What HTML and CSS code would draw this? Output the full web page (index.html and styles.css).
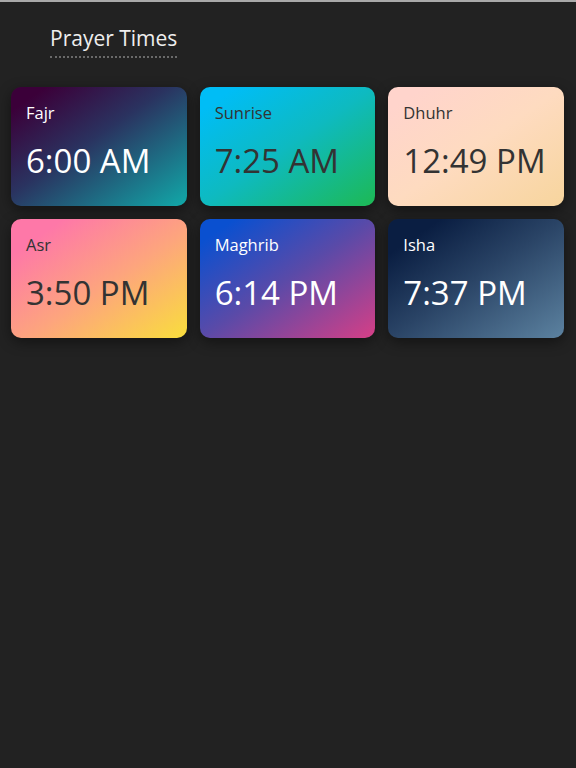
FILE: index.html
```
<!DOCTYPE html>
<html lang="en">

<head>
    <meta charset="UTF-8">
    <meta name="viewport" content="width=device-width, initial-scale=1.0">
    <title>Prayer Times</title>
    <link rel="stylesheet" href="styles.css">
</head>

<body>
    <header class="header">
        <h1 class="title">Prayer Times</h1>
    </header>
    <div class="wrap">
        <div class="card fajr">
            <div class="name">Fajr</div>
            <div class="time">6:00 AM</div>
        </div>
        <div class="card sunrise">
            <div class="name">Sunrise</div>
            <div class="time">7:25 AM</div>
        </div>
        <div class="card dhuhr">
            <div class="name">Dhuhr</div>
            <div class="time">12:49 PM</div>
        </div>
        <div class="card asr">
            <div class="name">Asr</div>
            <div class="time">3:50 PM</div>
        </div>
        <div class="card maghrib">
            <div class="name">Maghrib</div>
            <div class="time">6:14 PM</div>
        </div>
        <div class="card isha">
            <div class="name">Isha</div>
            <div class="time">7:37 PM</div>
        </div>
    </div>
</body>
</html>
```

FILE: styles.css
```
* {
    margin: 0;
    box-sizing: border-box;
    padding: 0;
}

html,
body {
    height: 100%;
}

body {
    background: #222222;
    border-top: 2px solid #a9a9a9;
    font-family: "Open Sans", "Liberation Sans", sans-serif;
    color: #ffffff;
}

.header {
    padding: 22px 0 0 50px;
}

.title {
    display: inline-block;
    font-size: 21px;
    font-weight: 400;
    line-height: 28px;
    padding-bottom: 4px;
    color: #eeeeee;
    border-bottom: 2px dotted #6a6a6a;
}

.wrap {
    display: grid;
    grid-template-columns: repeat(3, 1fr);
    gap: 13px;
    padding: 29px 12px 0 11px;
}

.card {
    height: 119px;
    padding: 16px 15px;
    border-radius: 10px;
    box-shadow: 0 4px 14px rgba(0, 0, 0, 0.45);
}

.name {
    font-size: 16.5px;
    line-height: 20px;
}

.time {
    margin-top: 18px;
    font-size: 33px;
    line-height: 40px;
}

.fajr {
    background: linear-gradient(to bottom right, #3b0039 10%, #2a3360 45%, #11a9a9 100%);
}

.sunrise {
    background: linear-gradient(to bottom right, #00bdf6 10%, #0ebac0 50%, #1db954 100%);
    color: #333333;
}

.dhuhr {
    background: linear-gradient(to bottom right, #ffd4cc 10%, #fedbc0 50%, #f7d59d 100%);
    color: #333333;
}

.asr {
    background: linear-gradient(to bottom right, #fe78a8 15%, #fda57d 55%, #f9de3c 100%);
    color: #333333;
}

.maghrib {
    background: linear-gradient(to bottom right, #0a50d0 10%, #5a4aa8 50%, #d63f86 100%);
}

.isha {
    background: linear-gradient(to bottom right, #0a1e42 15%, #2a4466 50%, #5c82a0 100%);
}
```
